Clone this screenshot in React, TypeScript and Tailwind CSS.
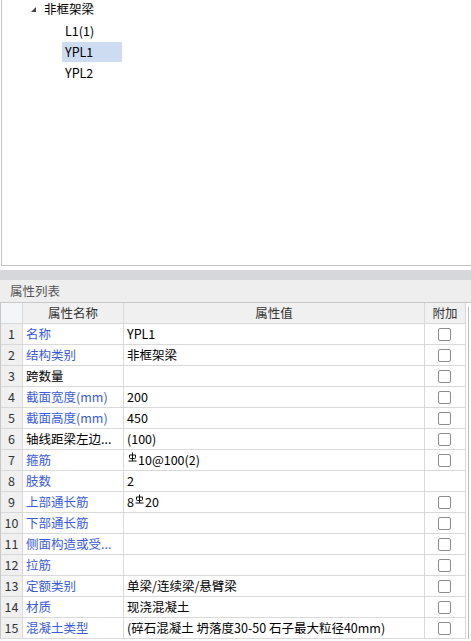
import React from "react";

interface Row {
  name: string;
  value: string;
  blue: boolean;
  check: boolean;
}

const rows: Row[] = [
  { name: "名称", value: "YPL1", blue: true, check: true },
  { name: "结构类别", value: "非框架梁", blue: true, check: true },
  { name: "跨数量", value: "", blue: false, check: true },
  { name: "截面宽度(mm)", value: "200", blue: true, check: true },
  { name: "截面高度(mm)", value: "450", blue: true, check: true },
  { name: "轴线距梁左边...", value: "(100)", blue: false, check: true },
  { name: "箍筋", value: "#10@100(2)", blue: true, check: true },
  { name: "肢数", value: "2", blue: true, check: false },
  { name: "上部通长筋", value: "8#20", blue: true, check: true },
  { name: "下部通长筋", value: "", blue: true, check: true },
  { name: "侧面构造或受...", value: "", blue: true, check: true },
  { name: "拉筋", value: "", blue: true, check: true },
  { name: "定额类别", value: "单梁/连续梁/悬臂梁", blue: true, check: true },
  { name: "材质", value: "现浇混凝土", blue: true, check: true },
  { name: "混凝土类型", value: "(碎石混凝土 坍落度30-50 石子最大粒径40mm)", blue: true, check: true },
];

// rebar grade mark, drawn since no installed font carries it
function RebarMark() {
  return (
    <svg width="9" height="10" viewBox="0 0 9 10" className="inline-block relative -top-[3px] mx-[1px]">
      <path d="M4.5 0.5 V9" stroke="#111" strokeWidth="1" fill="none" />
      <path d="M1.5 3 H7.5 V5.5 Q7.5 6.5 6.5 6.5 H2.5 Q1.5 6.5 1.5 5.5 Z" stroke="#111" strokeWidth="1" fill="none" />
      <path d="M0.5 9 H8.5" stroke="#111" strokeWidth="1" fill="none" />
    </svg>
  );
}

function Value({ text }: { text: string }) {
  const parts = text.split("#");
  if (parts.length === 1) return <>{text}</>;
  return (
    <>
      {parts[0]}
      <RebarMark />
      {parts[1]}
    </>
  );
}

function TreeNode({ label, selected }: { label: string; selected?: boolean }) {
  return (
    <div className="h-[21px] flex items-center pl-[60px]">
      <span className={`px-[3px] h-[20px] leading-[20px] ${selected ? "bg-[#cddcf1] w-[60px]" : ""}`}>{label}</span>
    </div>
  );
}

export default function App() {
  return (
    <div
      className="w-[471px] h-[641px] bg-white overflow-hidden text-[12.5px] text-black"
      style={{ fontFamily: '"Noto Sans CJK SC", "Liberation Sans", sans-serif' }}
    >
      {/* tree panel */}
      <div className="h-[267px] ml-[1px] border-l border-b border-[#c4c4c4]">
        <div className="h-[21px] flex items-center pl-[28px] -mt-[1px]">
          <svg width="7" height="7" viewBox="0 0 7 7" className="mr-[7px]">
            <path d="M6 1 L6 6 L1 6 Z" fill="#444" />
          </svg>
          <span>非框架梁</span>
        </div>
        <TreeNode label="L1(1)" />
        <TreeNode label="YPL1" selected />
        <TreeNode label="YPL2" />
      </div>

      <div className="h-[4px] bg-white" />
      <div className="h-[10px] bg-[#d6d7db]" />
      <div className="h-[22px] bg-[#eeeeee] flex items-center pl-[10px] text-[#555]">属性列表</div>

      {/* property table */}
      <div className="flex border-t border-[#c8c8c8]">
        <div className="border-l border-[#c8c8c8]">
          <div className="flex h-[21px] border-b border-[#d9d9d9] text-[#333]">
            <div className="w-[22px] bg-[#f4f5f8] border-r border-[#d9d9d9]" />
            <div className="w-[101px] bg-[#f0f0f0] border-r border-[#d9d9d9] flex items-center justify-center">属性名称</div>
            <div className="w-[301px] bg-[#f0f0f0] border-r border-[#d9d9d9] flex items-center justify-center">属性值</div>
            <div className="w-[41px] bg-[#f0f0f0] border-r border-[#d9d9d9] flex items-center justify-center">附加</div>
          </div>
          {rows.map((r, i) => (
            <div key={i} className="flex h-[21px] border-b border-[#d9d9d9]">
              <div className="w-[22px] bg-[#f0f0f0] border-r border-[#d9d9d9] flex items-center justify-center text-[#333]">
                {i + 1}
              </div>
              <div className={`w-[101px] border-r border-[#d9d9d9] flex items-center pl-[3px] whitespace-nowrap overflow-hidden ${r.blue ? "text-[#3a5bdc]" : ""}`}>
                {r.name}
              </div>
              <div className="w-[301px] border-r border-[#d9d9d9] flex items-center pl-[3px] whitespace-nowrap overflow-hidden">
                <Value text={r.value} />
              </div>
              <div className="w-[41px] border-r border-[#d9d9d9] flex items-center justify-center pr-[2px]">
                {r.check && <div className="w-[13px] h-[13px] border border-[#8c8c8c] rounded-[2px] bg-white" />}
              </div>
            </div>
          ))}
        </div>
        <div className="w-[2px]" />
        <div className="mt-[4px] w-[1px] bg-[#bdbdbd]" />
      </div>
    </div>
  );
}
